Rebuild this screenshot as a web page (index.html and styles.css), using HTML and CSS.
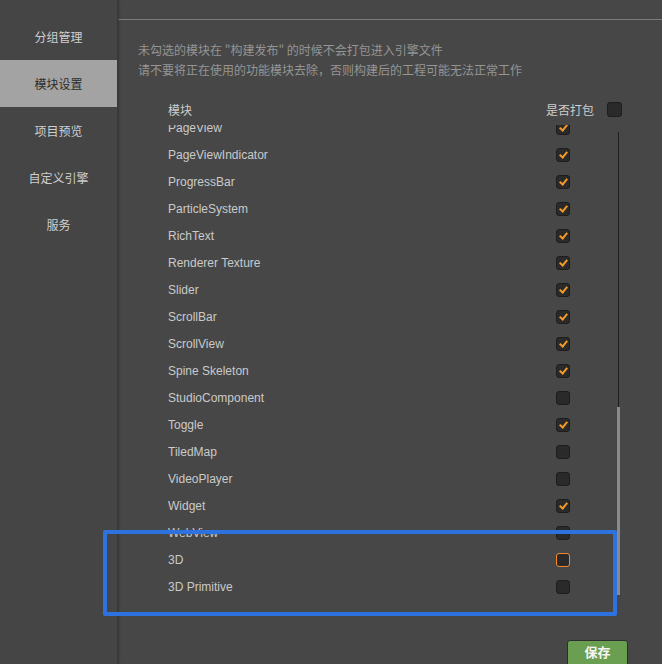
FILE: index.html
```html
<!DOCTYPE html>
<html lang="zh-CN">
<head>
<meta charset="utf-8">
<title>模块设置</title>
<link rel="stylesheet" href="styles.css">
</head>
<body>
<div class="app">
  <nav class="sidebar">
    <div class="nav-item">分组管理</div>
    <div class="nav-item active">模块设置</div>
    <div class="nav-item">项目预览</div>
    <div class="nav-item">自定义引擎</div>
    <div class="nav-item">服务</div>
  </nav>
  <main class="main">
    <div class="topbar"></div>
    <div class="content">
      <p class="desc">未勾选的模块在 "构建发布" 的时候不会打包进入引擎文件<br>请不要将正在使用的功能模块去除，否则构建后的工程可能无法正常工作</p>
      <div class="head-row">
        <span class="head-name">模块</span>
        <span class="head-pack">是否打包</span>
        <span class="cb"></span>
      </div>
      <div class="list-area">
        <div class="viewport">
          <div class="rows">
            <div class="row"><span class="name">PageView</span><span class="cb on"></span></div>
            <div class="row"><span class="name">PageViewIndicator</span><span class="cb on"></span></div>
            <div class="row"><span class="name">ProgressBar</span><span class="cb on"></span></div>
            <div class="row"><span class="name">ParticleSystem</span><span class="cb on"></span></div>
            <div class="row"><span class="name">RichText</span><span class="cb on"></span></div>
            <div class="row"><span class="name">Renderer Texture</span><span class="cb on"></span></div>
            <div class="row"><span class="name">Slider</span><span class="cb on"></span></div>
            <div class="row"><span class="name">ScrollBar</span><span class="cb on"></span></div>
            <div class="row"><span class="name">ScrollView</span><span class="cb on"></span></div>
            <div class="row"><span class="name">Spine Skeleton</span><span class="cb on"></span></div>
            <div class="row"><span class="name">StudioComponent</span><span class="cb"></span></div>
            <div class="row"><span class="name">Toggle</span><span class="cb on"></span></div>
            <div class="row"><span class="name">TiledMap</span><span class="cb"></span></div>
            <div class="row"><span class="name">VideoPlayer</span><span class="cb"></span></div>
            <div class="row"><span class="name">Widget</span><span class="cb on"></span></div>
            <div class="row"><span class="name">WebView</span><span class="cb"></span></div>
            <div class="row"><span class="name">3D</span><span class="cb focus"></span></div>
            <div class="row"><span class="name">3D Primitive</span><span class="cb"></span></div>
          </div>
        </div>
        <div class="scrollbar"><div class="thumb"></div></div>
      </div>
      <div class="footer">
        <button class="save">保存</button>
      </div>
    </div>
  </main>
  <div class="highlight"></div>
</div>
</body>
</html>
```

FILE: styles.css
```css
* { box-sizing: border-box; }
html, body {
  margin: 0;
  padding: 0;
  background: #474747;
  font-family: "Liberation Sans", "Noto Sans CJK SC", sans-serif;
  font-size: 12px;
  color: #c8c8c8;
  overflow: hidden;
}
.app {
  position: relative;
  display: flex;
  width: 662px;
  height: 664px;
}
.sidebar {
  width: 118px;
  flex: none;
  background: #454545;
  border-right: 1px solid #383838;
  box-shadow: 1px 0 2px rgba(0,0,0,0.25);
  padding-top: 13px;
  z-index: 1;
}
.nav-item {
  height: 47px;
  display: flex;
  align-items: center;
  justify-content: center;
  font-family: "Noto Sans CJK SC", sans-serif;
  font-size: 12px;
  color: #cfcfcf;
}
.nav-item.active {
  background: #a3a3a3;
  color: #2c2c2c;
}
.main {
  flex: 1;
  display: flex;
  flex-direction: column;
  min-width: 0;
}
.topbar {
  height: 20px;
  border-bottom: 1px solid #7a7a7a;
  flex: none;
}
.content {
  padding: 0 42px 0 20px;
  display: flex;
  flex-direction: column;
}
.desc {
  margin: 20px 0 0;
  line-height: 20px;
  color: #959595;
  font-family: "Noto Sans CJK SC", sans-serif;
  font-size: 12px;
}
.head-row {
  display: flex;
  align-items: center;
  height: 20px;
  margin: 19px -2px 6px 0;
  padding-left: 30px;
  font-family: "Noto Sans CJK SC", sans-serif;
  color: #cdcdcd;
}
.head-name { flex: 1; }
.head-pack { margin-right: 13px; }
.head-row .cb { width: 15px; height: 15px; }
.list-area {
  display: flex;
  height: 472px;
}
.viewport {
  flex: 1;
  overflow: hidden;
}
.rows { margin-top: -11px; }
.row {
  height: 27px;
  display: flex;
  align-items: center;
  padding: 0 47px 0 30px;
}
.name {
  flex: 1;
  color: #cacaca;
  font-size: 12px;
}
.cb {
  width: 14px;
  height: 14px;
  flex: none;
  background: #2a2a2a;
  border: 1px solid #1d1d1d;
  border-radius: 3px;
  position: relative;
}
.cb.on::after {
  content: "";
  position: absolute;
  left: 4px;
  top: 1px;
  width: 3px;
  height: 6px;
  border: solid #f39a28;
  border-width: 0 2.5px 2.5px 0;
  transform: rotate(40deg);
}
.cb.focus { border-color: #ee8a2c; }
.scrollbar {
  width: 3px;
  flex: none;
  position: relative;
  padding-top: 282px;
}
.scrollbar::before {
  content: "";
  position: absolute;
  left: 1px;
  top: 7px;
  height: 275px;
  width: 1px;
  background: #1f1f1f;
}
.thumb {
  height: 188px;
  background: #8a8a8a;
}
.footer {
  display: flex;
  justify-content: flex-end;
  margin-top: 43px;
  margin-right: -8px;
}
.save {
  width: 61px;
  height: 30px;
  background: #6a9f52;
  border: 1px solid #2e2e2e;
  border-radius: 3px;
  color: #f4f4f4;
  font-family: "Noto Sans CJK SC", sans-serif;
  font-weight: bold;
  font-size: 13px;
  padding: 0 0 7px;
}
.highlight {
  position: absolute;
  left: 103px;
  top: 530px;
  width: 514px;
  height: 86px;
  border: 4px solid #2d72de;
  border-radius: 2px;
  pointer-events: none;
  z-index: 2;
}
```
